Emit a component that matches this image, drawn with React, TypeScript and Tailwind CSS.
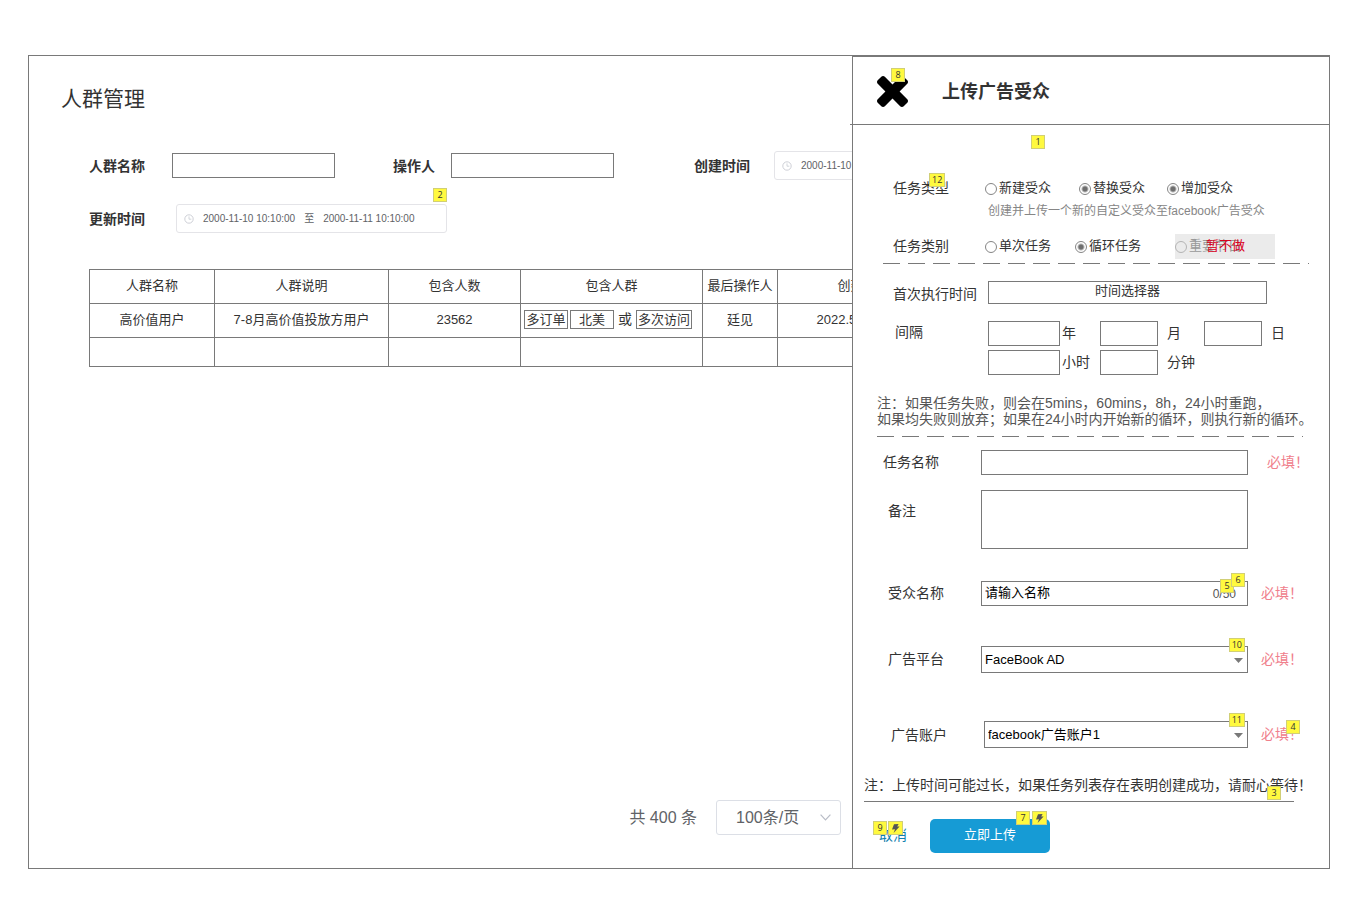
import React, { useState } from 'react';

const labelText = 'text-sm leading-5 text-[#333333]';
const boxInput = 'border border-[#797979] bg-white text-[13px] text-black outline-none';

function Badge({ children, className }: { children: React.ReactNode; className: string }) {
  return (
    <span
      className={`absolute z-10 flex h-3.5 min-w-3.5 items-center justify-center border border-[#d1cf76] bg-[#fff93f] px-0.5 font-['Open_Sans',sans-serif] text-[9px] leading-3 font-normal text-[#333333] ${className}`}
    >
      {children}
    </span>
  );
}

function Bolt() {
  return (
    <svg width="9" height="9" viewBox="0 0 9 9" fill="#555555" aria-hidden="true">
      <path d="M3 0.3 7.6 0 6.2 2.5 8.6 2.4 2.6 9 4 5.2 1 5.5z" />
    </svg>
  );
}

function DashedRule({ className }: { className: string }) {
  return (
    <div
      className={`h-px bg-[repeating-linear-gradient(to_right,#797979_0px,#797979_17px,transparent_17px,transparent_25px)] ${className}`}
    />
  );
}

function DateRange({ label, className }: { label: string; className: string }) {
  return (
    <button
      type="button"
      aria-label={label}
      className={`flex h-[29px] w-[271px] shrink-0 items-center rounded-[3px] border border-[#e4e4e8] bg-white pl-[7px] text-[10px] text-[#606266] ${className}`}
    >
      <svg width="10" height="10" viewBox="0 0 10 10" fill="none" stroke="#c8cbd2" aria-hidden="true">
        <circle cx="5" cy="5" r="4.2" strokeWidth="0.9" />
        <path d="M5 2.4v2.8h2.3" strokeWidth="0.8" />
      </svg>
      <span className="ml-[9px]">2000-11-10 10:10:00</span>
      <span className="mx-[9px]">至</span>
      <span>2000-11-11 10:10:00</span>
    </button>
  );
}

interface RadioProps {
  id: string;
  label: string;
  checked?: boolean;
  disabled?: boolean;
}

function Radio({ id, label, checked = false, disabled = false }: RadioProps) {
  return (
    <label
      htmlFor={id}
      className={`flex items-center gap-0.5 text-[13px] leading-5 whitespace-nowrap ${disabled ? 'text-[#999999]' : 'text-[#333333]'}`}
    >
      <input
        id={id}
        name={id}
        type="radio"
        defaultChecked={checked}
        disabled={disabled}
        className="mt-0.5 size-3 shrink-0 appearance-none rounded-full border border-[#858585] bg-white checked:bg-[radial-gradient(circle,#6e6e6e_0px,#6e6e6e_2px,transparent_4px)] disabled:border-[#b4b4b4] disabled:bg-transparent"
      />
      {label}
    </label>
  );
}

function Required({ className = 'ml-[13px] w-[68px]' }: { className?: string }) {
  return <span className={`block shrink-0 pb-0.5 text-sm leading-5 text-[#f0808c] ${className}`}>必填！</span>;
}

function SelectBox({ id, options, badge }: { id: string; options: string[]; badge: string }) {
  return (
    <div className="relative flex-1">
      <select id={id} className={`block h-[27px] w-full appearance-none pl-[3px] ${boxInput}`}>
        {options.map(o => (
          <option key={o}>{o}</option>
        ))}
      </select>
      <svg
        width="9"
        height="5"
        viewBox="0 0 9 5"
        fill="#797979"
        aria-hidden="true"
        className="pointer-events-none absolute top-3 right-[5px]"
      >
        <path d="M0 0h9L4.5 5z" />
      </svg>
      <Badge className="-top-2 right-[3px]">{badge}</Badge>
    </div>
  );
}

function CrowdTable() {
  const cell = 'border border-[#797979] px-0 pt-0 pb-0.5 font-normal whitespace-nowrap';
  return (
    <table className="w-[861px] table-fixed border-collapse text-center text-[13px] leading-5 text-[#333333]">
      <colgroup>
        <col className="w-[125px]" />
        <col className="w-[174px]" />
        <col className="w-[132px]" />
        <col className="w-[182px]" />
        <col className="w-[75px]" />
        <col className="w-[172px]" />
      </colgroup>
      <thead>
        <tr className="h-[34px]">
          {['人群名称', '人群说明', '包含人数', '包含人群', '最后操作人', '创建时间'].map(h => (
            <th key={h} className={cell}>{h}</th>
          ))}
        </tr>
      </thead>
      <tbody>
        <tr className="h-[34px]">
          <td className={cell}>高价值用户</td>
          <td className={cell}>7-8月高价值投放方用户</td>
          <td className={cell}>23562</td>
          <td className={cell}>
            <div className="flex items-center pl-[3px] leading-[17px]">
              <span className="w-11 border border-[#797979]">多订单</span>
              <span className="ml-0.5 w-11 border border-[#797979]">北美</span>
              <span className="mx-1 text-sm leading-[17px]">或</span>
              <span className="w-14 border border-[#797979]">多次访问</span>
            </div>
          </td>
          <td className={cell}>廷见</td>
          <td className={cell}>2022.5.10 10:00</td>
        </tr>
        <tr className="h-[29px]">
          {[0, 1, 2, 3, 4, 5].map(i => (
            <td key={i} className={cell} />
          ))}
        </tr>
      </tbody>
    </table>
  );
}

function CrowdPage() {
  const filterLabel = 'shrink-0 text-sm font-bold text-[#333333]';
  const filterInput = 'h-[25px] w-[163px] shrink-0 px-1';
  return (
    <main className="flex min-w-0 flex-1 flex-col overflow-hidden pt-[29px]">
      <h1 className="pl-8 text-[21px] leading-7 text-[#333333]">人群管理</h1>

      <div className="mt-[38px] flex items-center pl-[60px]">
        <label htmlFor="crowd-name" className={filterLabel}>人群名称</label>
        <input id="crowd-name" type="text" className={`ml-[27px] ${filterInput} ${boxInput}`} />
        <label htmlFor="operator" className={`ml-[58px] ${filterLabel}`}>操作人</label>
        <input id="operator" type="text" className={`ml-4 ${filterInput} ${boxInput}`} />
        <span className={`ml-20 ${filterLabel}`}>创建时间</span>
        <DateRange label="创建时间" className="ml-6" />
      </div>
      <div className="mt-6 flex items-center pl-[60px]">
        <span className={filterLabel}>更新时间</span>
        <div className="relative ml-[31px]">
          <DateRange label="更新时间" className="" />
          <Badge className="-top-4 right-0">2</Badge>
        </div>
      </div>

      <div className="mt-9 pl-[60px]">
        <CrowdTable />
      </div>

      {/* Pagination */}
      <div className="mt-auto flex items-center justify-end pr-[11px] pb-[33px] text-base text-[#606266]">
        <label htmlFor="page-size">共 400 条</label>
        <div className="relative ml-[19px]">
          <select
            id="page-size"
            className="block h-[35px] w-[125px] appearance-none rounded-[3px] border border-[#dcdfe6] bg-white pl-[19px] text-base text-[#606266] outline-none"
          >
            <option>100条/页</option>
            <option>200条/页</option>
          </select>
          <svg
            width="11"
            height="7"
            viewBox="0 0 11 7"
            fill="none"
            stroke="#b8bcc6"
            strokeWidth="1.2"
            aria-hidden="true"
            className="pointer-events-none absolute top-3.5 right-2.5"
          >
            <path d="M0.6 0.6 5.5 5.8 10.4 0.6" />
          </svg>
        </div>
      </div>
    </main>
  );
}

function UploadDrawer() {
  const [name, setName] = useState('');
  const rowLabel = `shrink-0 pb-0.5 ${labelText}`;

  return (
    <aside className="relative w-[477px] shrink-0 border-t border-l border-[#797979] bg-white">
      <header className="-ml-[3px] flex h-[68px] items-center border-b border-[#797979] pt-0.5 pl-[27px]">
        <button type="button" aria-label="关闭" className="relative">
          <svg width="31" height="31" viewBox="302 366 1188 1188" aria-hidden="true">
            <path d="M1490 1322q0 40-28 68l-136 136q-28 28-68 28t-68-28l-294-294-294 294q-28 28-68 28t-68-28l-136-136q-28-28-28-68t28-68l294-294-294-294q-28-28-28-68t28-68l136-136q28-28 68-28t68 28l294 294 294-294q28-28 68-28t68 28l136 136q28 28 28 68t-28 68l-294 294 294 294q28 28 28 68z" />
          </svg>
          <Badge className="-top-2 right-[3px]">8</Badge>
        </button>
        <h2 className="ml-[34px] text-lg font-bold text-[#333333]">上传广告受众</h2>
      </header>

      <form className="relative pt-[53px]" onSubmit={e => e.preventDefault()}>
        <Badge className="top-2.5 left-[178px]">1</Badge>

        <div className="flex items-center pl-10">
          <span className={`relative w-[92px] shrink-0 ${labelText}`}>
            任务类型
            <Badge className="-top-[5px] left-9">12</Badge>
          </span>
          <div className="flex gap-[22px]">
            <div className="w-[72px]"><Radio id="type-new" label="新建受众" /></div>
            <Radio id="type-replace" label="替换受众" checked />
            <Radio id="type-add" label="增加受众" checked />
          </div>
        </div>
        <p className="mt-[5px] pl-[135px] text-xs leading-4 text-[#868686]">
          创建并上传一个新的自定义受众至facebook广告受众
        </p>
        <div className="mt-[15px] flex h-[25px] items-center pl-10">
          <span className={`w-[92px] ${rowLabel}`}>任务类别</span>
          <div className="flex h-[25px] items-center pb-0.5">
            <Radio id="kind-once" label="单次任务" />
            <div className="ml-6"><Radio id="kind-loop" label="循环任务" checked /></div>
          </div>
          <div className="relative ml-[34px] flex h-[25px] w-[100px] items-center bg-[#ebebeb] pb-0.5">
            <Radio id="kind-key" label="重要节日" disabled />
            <span className="absolute left-[31px] text-[13px] leading-5 text-[#d9001b]">暂不做</span>
          </div>
        </div>
        <DashedRule className="mt-1 mr-5 ml-[30px]" />

        <div className="mt-[17px] flex items-end pl-10">
          <label htmlFor="first-run" className={`w-[95px] shrink-0 ${labelText}`}>首次执行时间</label>
          <button
            id="first-run"
            type="button"
            className="mr-[62px] h-[23px] flex-1 border border-[#797979] pb-1 text-[13px] leading-4 text-[#333333]"
          >
            时间选择器
          </button>
        </div>

        <div className="mt-[17px] flex pl-[42px]">
          <span className={`w-[93px] shrink-0 pt-px ${labelText}`}>间隔</span>
          <div className="grid grid-cols-[72px_40px_58px_46px_58px_auto] items-center gap-y-1">
            <input id="years" type="text" className={`h-[25px] px-1 ${boxInput}`} />
            <label htmlFor="years" className={`pl-0.5 ${rowLabel}`}>年</label>
            <input id="months" type="text" className={`h-[25px] px-1 ${boxInput}`} />
            <label htmlFor="months" className={`pl-[9px] ${rowLabel}`}>月</label>
            <input id="days" type="text" className={`h-[25px] px-1 ${boxInput}`} />
            <label htmlFor="days" className={`pl-[9px] ${rowLabel}`}>日</label>
            <input id="hours" type="text" className={`h-[25px] px-1 ${boxInput}`} />
            <label htmlFor="hours" className={`pl-0.5 ${rowLabel}`}>小时</label>
            <input id="minutes" type="text" className={`h-[25px] px-1 ${boxInput}`} />
            <label htmlFor="minutes" className={`pl-[9px] whitespace-nowrap ${rowLabel}`}>分钟</label>
          </div>
        </div>

        <p className="mt-5 pl-6 text-sm leading-4 whitespace-nowrap text-[#555555]">
          注：如果任务失败，则会在5mins，60mins，8h，24小时重跑，
          <br />
          如果均失败则放弃；如果在24小时内开始新的循环，则执行新的循环。
        </p>
        <DashedRule className="mt-[9px] mr-[26px] ml-6" />

        <div className="mt-[13px] flex items-center pl-[30px]">
          <label htmlFor="task-name" className={`w-[98px] ${rowLabel}`}>任务名称</label>
          <input id="task-name" type="text" className={`h-[25px] min-w-0 flex-1 px-1 ${boxInput}`} />
          <Required className="ml-[19px] w-[62px]" />
        </div>

        <div className="mt-[15px] flex pl-[35px]">
          <label htmlFor="remark" className={`w-[93px] shrink-0 pt-[11px] ${labelText}`}>备注</label>
          <textarea id="remark" className={`mr-[81px] block h-[59px] min-w-0 flex-1 resize-none px-1 ${boxInput}`} />
        </div>

        <div className="mt-8 flex items-center pl-[35px]">
          <label htmlFor="audience-name" className={`w-[93px] ${rowLabel}`}>受众名称</label>
          <div className="relative flex-1">
            <input
              id="audience-name"
              type="text"
              maxLength={50}
              value={name}
              onChange={e => setName(e.target.value)}
              placeholder="请输入名称"
              className={`block h-[25px] w-full pr-10 pb-0.5 pl-[3px] placeholder:text-black ${boxInput}`}
            />
            <span className="absolute top-[5px] right-3 text-xs leading-4 text-[#555555]">{name.length}/50</span>
            <Badge className="-top-0.5 right-3.5">5</Badge>
            <Badge className="-top-2 right-[3px]">6</Badge>
          </div>
          <Required />
        </div>

        <div className="mt-10 flex items-center pl-[35px]">
          <label htmlFor="platform" className={`w-[93px] ${rowLabel}`}>广告平台</label>
          <SelectBox id="platform" options={['FaceBook AD']} badge="10" />
          <Required />
        </div>

        <div className="mt-12 flex items-center pl-[38px]">
          <label htmlFor="account" className={`w-[93px] shrink-0 ${labelText}`}>广告账户</label>
          <SelectBox id="account" options={['facebook广告账户1']} badge="11" />
          <div className="relative shrink-0">
            <Required />
            <Badge className="-top-1 left-[38px]">4</Badge>
          </div>
        </div>

        <div className="relative mt-[27px] mr-[35px] ml-[11px] border-b border-[#797979] pb-1.5">
          <p className={`whitespace-nowrap ${labelText}`}>
            注：上传时间可能过长，如果任务列表存在表明创建成功，请耐心等待！
          </p>
          <Badge className="right-[13px] bottom-px">3</Badge>
        </div>

        <div className="mt-[17px] flex items-center pb-[15px] pl-[26px]">
          <button type="button" className="relative pb-0.5 text-sm leading-5 text-[#0f7fae]">
            取消
            <Badge className="-top-1 -left-1.5">9</Badge>
            <Badge className="-top-1 left-[9px]"><Bolt /></Badge>
          </button>
          <button
            type="submit"
            className="relative ml-[23px] h-[34px] w-[120px] rounded-[5px] bg-[#169bd5] pb-0.5 text-[13px] text-white"
          >
            立即上传
            <Badge className="-top-2 right-5">7</Badge>
            <Badge className="-top-2 right-[3px]"><Bolt /></Badge>
          </button>
        </div>
      </form>
    </aside>
  );
}

export default function App() {
  return (
    <div className="bg-white pt-[55px] pr-[21px] pb-[50px] pl-7 font-['Liberation_Sans','Noto_Sans_CJK_SC',sans-serif]">
      <div className="flex border border-[#797979]">
        <CrowdPage />
        <UploadDrawer />
      </div>
    </div>
  );
}
